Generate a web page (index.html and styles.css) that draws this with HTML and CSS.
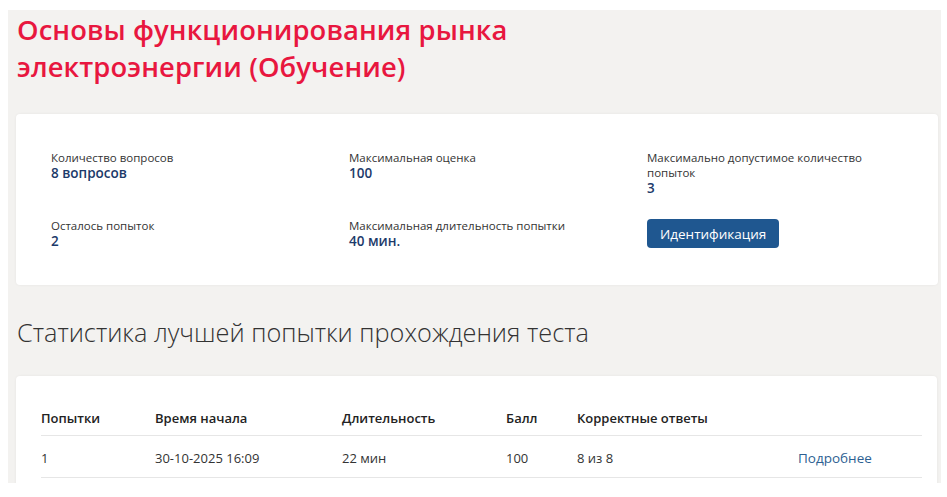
FILE: index.html
```html
<!DOCTYPE html>
<html lang="ru">
<head>
<meta charset="utf-8">
<link rel="stylesheet" href="styles.css">
</head>
<body>
<div class="panel">
  <h1 class="title">Основы функционирования рынка<br>электроэнергии (Обучение)</h1>
  <section class="card info">
    <div class="info-grid">
      <div class="item">
        <div class="label">Количество вопросов</div>
        <div class="value">8 вопросов</div>
      </div>
      <div class="item">
        <div class="label">Максимальная оценка</div>
        <div class="value">100</div>
      </div>
      <div class="item">
        <div class="label narrow">Максимально допустимое количество попыток</div>
        <div class="value">3</div>
      </div>
      <div class="item">
        <div class="label">Осталось попыток</div>
        <div class="value">2</div>
      </div>
      <div class="item">
        <div class="label">Максимальная длительность попытки</div>
        <div class="value">40 мин.</div>
      </div>
      <div class="item">
        <button class="btn" type="button">Идентификация</button>
      </div>
    </div>
  </section>
  <h2 class="subtitle">Статистика лучшей попытки прохождения теста</h2>
  <section class="card stats">
    <table class="table">
      <colgroup>
        <col class="c1"><col class="c2"><col class="c3"><col class="c4"><col class="c5"><col class="c6">
      </colgroup>
      <thead>
        <tr><th>Попытки</th><th>Время начала</th><th>Длительность</th><th>Балл</th><th>Корректные ответы</th><th></th></tr>
      </thead>
      <tbody>
        <tr><td>1</td><td>30-10-2025 16:09</td><td>22 мин</td><td>100</td><td>8 из 8</td><td><a class="link" href="#">Подробнее</a></td></tr>
      </tbody>
    </table>
  </section>
</div>
</body>
</html>
```
FILE: styles.css
```css
html, body {
  margin: 0;
  padding: 0;
  background: #ffffff;
}
body {
  font-family: "Open Sans", "Noto Sans", sans-serif;
  color: #333333;
}
.panel {
  margin: 10px 6px 0 8px;
  height: 473px;
  background: #f3f2f0;
  overflow: hidden;
  padding: 1px 0 0 0;
  box-sizing: border-box;
}
.title {
  margin: 0 0 0 9px;
  font-family: "Open Sans", sans-serif;
  font-weight: 600;
  font-size: 27.4px;
  line-height: 37px;
  color: #e8173f;
  letter-spacing: 0.1px;
}
.card {
  background: #ffffff;
  border-radius: 4px;
  box-shadow: 0 0 3px rgba(0,0,0,0.06);
}
.info {
  margin: 29px 3px 0 8px;
  height: 171px;
  box-sizing: border-box;
  padding: 36px 20px 0 35px;
}
.info-grid {
  display: grid;
  grid-template-columns: 298px 298px 1fr;
  row-gap: 21px;
}
.label {
  font-size: 11.5px;
  line-height: 15px;
  color: #333333;
}
.label.narrow {
  max-width: 230px;
}
.value {
  font-size: 13.5px;
  line-height: 17px;
  font-weight: 600;
  color: #1c3a6a;
}
.btn {
  margin-top: 1px;
  height: 29px;
  padding: 0 13px;
  border: none;
  border-radius: 4px;
  background: #1f5790;
  color: #ffffff;
  font-family: "Open Sans", sans-serif;
  font-size: 13.5px;
}
.subtitle {
  margin: 30px 0 0 9px;
  font-family: "Open Sans", sans-serif;
  font-weight: 300;
  font-size: 25.3px;
  line-height: 34px;
  color: #333333;
}
.stats {
  margin: 27px 4px 0 8px;
  padding: 33px 15px 20px 25px;
  height: 200px;
  box-sizing: border-box;
}
.table {
  width: 100%;
  border-collapse: collapse;
  table-layout: fixed;
}
.c1 { width: 114px; }
.c2 { width: 187px; }
.c3 { width: 164px; }
.c4 { width: 71px; }
.c5 { width: 221px; }
.table th {
  text-align: left;
  font-size: 13px;
  font-weight: 600;
  color: #222222;
  padding: 0 0 8px 0;
  height: 17px;
  border-bottom: 1px solid #e6e6e6;
}
.table td {
  font-size: 13px;
  color: #333333;
  padding: 2px 0 0 0;
  height: 39px;
  border-bottom: 1px solid #e6e6e6;
}
.link {
  color: #2d5f92;
  text-decoration: none;
  font-size: 13.5px;
}
```
